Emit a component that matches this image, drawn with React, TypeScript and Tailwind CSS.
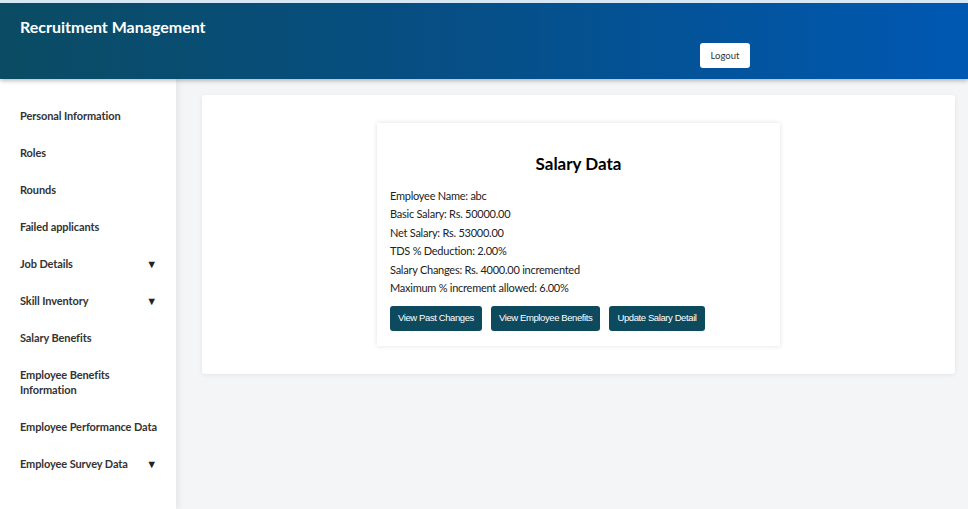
import { type ReactNode } from "react";

type NavItem = { label: ReactNode; caret?: boolean };

const navItems: NavItem[] = [
  { label: "Personal Information" },
  { label: "Roles" },
  { label: "Rounds" },
  { label: "Failed applicants" },
  { label: "Job Details", caret: true },
  { label: "Skill Inventory", caret: true },
  { label: "Salary Benefits" },
  {
    label: (
      <>
        Employee Benefits
        <br />
        Information
      </>
    ),
  },
  { label: "Employee Performance Data" },
  { label: "Employee Survey Data", caret: true },
];

const salaryRows = [
  "Employee Name: abc",
  "Basic Salary: Rs. 50000.00",
  "Net Salary: Rs. 53000.00",
  "TDS % Deduction: 2.00%",
  "Salary Changes: Rs. 4000.00 incremented",
  "Maximum % increment allowed: 6.00%",
];

const actions = ["View Past Changes", "View Employee Benefits", "Update Salary Detail"];

function Header() {
  return (
    <header className="relative z-20 h-[79px] border-t-[3px] border-[#d6e8f5] bg-gradient-to-r from-[#0b4b63] via-[#064f88] to-[#0058b2] shadow-[0_2px_4px_rgba(0,0,0,0.25)]">
      <h1 className="absolute left-[20px] top-[12px] text-[16px] font-bold text-white">
        Recruitment Management
      </h1>
      <button
        type="button"
        className="absolute left-[700px] top-[40px] h-[25px] w-[50px] rounded-[3px] bg-white pt-[1px] text-[9.5px] text-[#333]"
      >
        Logout
      </button>
    </header>
  );
}

function Sidebar() {
  return (
    <nav className="relative z-10 w-[176px] shrink-0 bg-white pt-[29px] shadow-[3px_0_6px_rgba(0,0,0,0.06)]">
      <ul className="flex flex-col">
        {navItems.map((item, i) => (
          <li
            key={i}
            className="flex items-start justify-between pb-[22px] pl-[20px] pr-[19px] text-[11px] font-bold leading-[15px] tracking-[-0.1px] text-[#333]"
          >
            <span className="whitespace-nowrap">{item.label}</span>
            {item.caret ? <span className="text-[11px] leading-[15px] text-[#222]">▼</span> : null}
          </li>
        ))}
      </ul>
    </nav>
  );
}

function SalaryCard() {
  return (
    <section className="mx-auto w-[403px] bg-white px-[13px] pb-[15px] pt-[28px] shadow-[0_0_5px_rgba(0,0,0,0.12)]">
      <h2 className="text-center text-[17px] font-bold text-black">Salary Data</h2>
      <div className="mt-[10px] flex flex-col text-[11px] leading-[18.6px] tracking-[-0.25px] text-[#222]">
        {salaryRows.map((row) => (
          <p key={row}>{row}</p>
        ))}
      </div>
      <div className="mt-[8px] flex gap-[9px]">
        {actions.map((label) => (
          <button
            key={label}
            type="button"
            className="h-[25px] rounded-[3px] bg-[#0d4a5e] px-[8px] font-['Liberation_Sans',Arial,sans-serif] text-[9.5px] tracking-[-0.4px] text-white"
          >
            {label}
          </button>
        ))}
      </div>
    </section>
  );
}

export default function App() {
  return (
    <div className="flex h-[509px] w-[968px] flex-col overflow-hidden bg-[#f4f5f7] font-['Lato','Noto_Sans',sans-serif]">
      <Header />
      <div className="flex flex-1">
        <Sidebar />
        <main className="flex-1 pl-[26px] pr-[13px] pt-[16px]">
          <div className="rounded-[3px] bg-white pb-[28px] pt-[28px] shadow-[0_1px_4px_rgba(0,0,0,0.08)]">
            <SalaryCard />
          </div>
        </main>
      </div>
    </div>
  );
}
